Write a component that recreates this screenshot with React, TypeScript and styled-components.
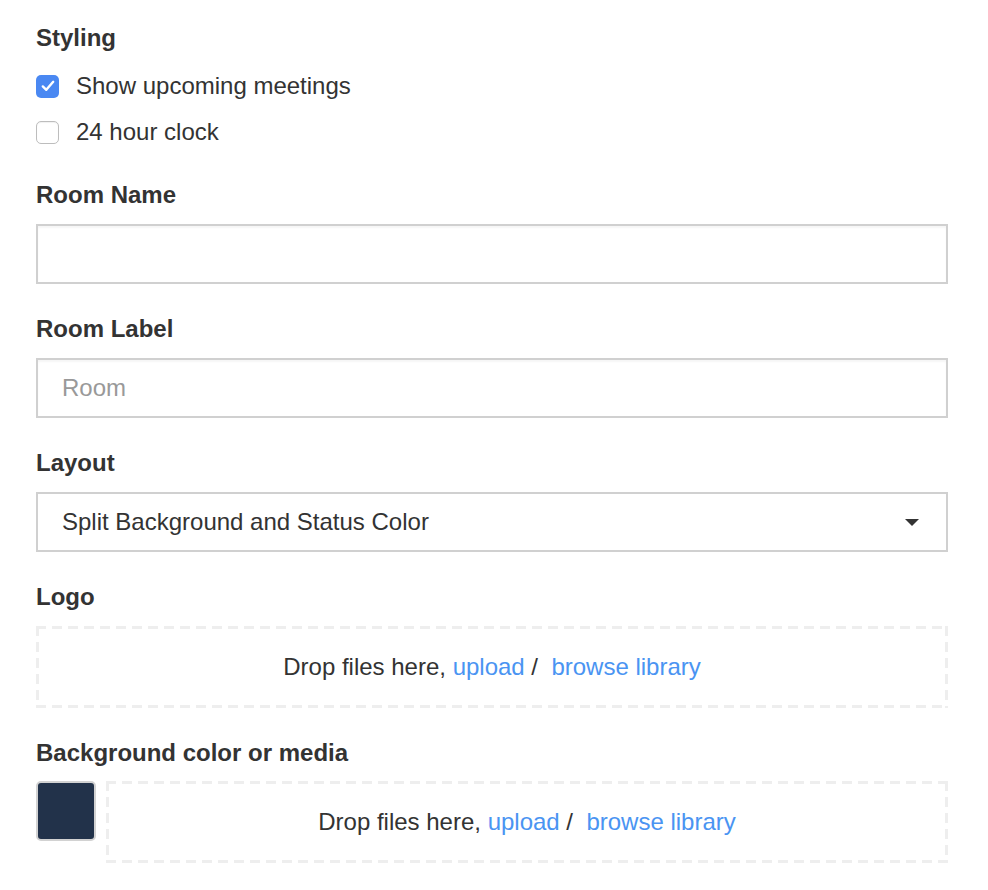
import React from "react";
import styled, { createGlobalStyle } from "styled-components";

const Global = createGlobalStyle`
  html, body { margin: 0; padding: 0; background: #fff; }
  body { font-family: "Liberation Sans", Arial, Helvetica, sans-serif; color: #333; }
`;

const Page = styled.div`
  padding: 24px 40px 24px 36px;
  width: 912px;
`;

const Heading = styled.div<{ $gap?: number }>`
  font-size: 24px;
  font-weight: 700;
  line-height: 28px;
  color: #333;
  margin-bottom: ${(p) => p.$gap ?? 15}px;
`;

const Section = styled.section<{ $after?: number }>`
  margin-bottom: ${(p) => p.$after ?? 31}px;
`;

const CheckRow = styled.label`
  display: flex;
  align-items: center;
  height: 46px;
  font-size: 24px;
  color: #333;
  gap: 17px;
`;

const Box = styled.span<{ $checked?: boolean }>`
  width: 23px;
  height: 23px;
  box-sizing: border-box;
  border-radius: 5px;
  display: flex;
  align-items: center;
  justify-content: center;
  background: ${(p) => (p.$checked ? "#4a88f2" : "#fff")};
  border: ${(p) => (p.$checked ? "none" : "1.5px solid #bdbdbd")};
  box-shadow: ${(p) => (p.$checked ? "none" : "inset 0 1px 1px rgba(0,0,0,0.06)")};
`;

const TextInput = styled.div`
  height: 60px;
  box-sizing: border-box;
  border: 2px solid #d0d0d0;
  box-shadow: inset 0 2px 2px rgba(0, 0, 0, 0.04);
  display: flex;
  align-items: center;
  padding: 0 24px;
  font-size: 24px;
  color: #999;
`;

const Select = styled(TextInput)`
  color: #333;
  justify-content: space-between;
  box-shadow: none;
  padding-right: 27px;
`;

const Caret = styled.span`
  width: 0;
  height: 0;
  border-left: 7.5px solid transparent;
  border-right: 7.5px solid transparent;
  border-top: 7.5px solid #333;
`;

const dash = "#eeeeee";

const DropZone = styled.div`
  flex: 1;
  height: 82px;
  box-sizing: border-box;
  background:
    linear-gradient(to right, ${dash} 10px, transparent 10px) top left / 16px 3px repeat-x,
    linear-gradient(to right, ${dash} 10px, transparent 10px) bottom left / 16px 3px repeat-x,
    linear-gradient(to bottom, ${dash} 10px, transparent 10px) top left / 3px 16px repeat-y,
    linear-gradient(to bottom, ${dash} 10px, transparent 10px) top right / 3px 16px repeat-y;
  display: flex;
  align-items: center;
  justify-content: center;
  font-size: 24px;
  color: #333;
  white-space: pre;
`;

const Link = styled.span`
  color: #4a94f2;
`;

const Row = styled.div`
  display: flex;
  gap: 10px;
`;

const Swatch = styled.div`
  width: 60px;
  height: 60px;
  box-sizing: border-box;
  border-radius: 5px;
  border: 2px solid #d2d2d2;
  background: #22324a;
`;

const Check = () => (
  <svg width="14" height="12" viewBox="0 0 14 12" fill="none">
    <path d="M1.8 6.4 L5.3 9.8 L12.2 1.8" stroke="#fff" strokeWidth="2.4" strokeLinecap="round" strokeLinejoin="round" />
  </svg>
);

const Drop = () => (
  <DropZone>
    Drop files here, <Link>upload</Link> /  <Link>browse library</Link>
  </DropZone>
);

export default function App() {
  return (
    <>
      <Global />
      <Page>
        <Section $after={26}>
          <Heading $gap={11}>Styling</Heading>
          <CheckRow>
            <Box $checked>
              <Check />
            </Box>
            Show upcoming meetings
          </CheckRow>
          <CheckRow>
            <Box />
            24 hour clock
          </CheckRow>
        </Section>
        <Section>
          <Heading>Room Name</Heading>
          <TextInput />
        </Section>
        <Section>
          <Heading>Room Label</Heading>
          <TextInput>Room</TextInput>
        </Section>
        <Section>
          <Heading>Layout</Heading>
          <Select>
            Split Background and Status Color
            <Caret />
          </Select>
        </Section>
        <Section>
          <Heading>Logo</Heading>
          <Row>
            <Drop />
          </Row>
        </Section>
        <Section $after={0}>
          <Heading $gap={14}>Background color or media</Heading>
          <Row>
            <Swatch />
            <Drop />
          </Row>
        </Section>
      </Page>
    </>
  );
}
